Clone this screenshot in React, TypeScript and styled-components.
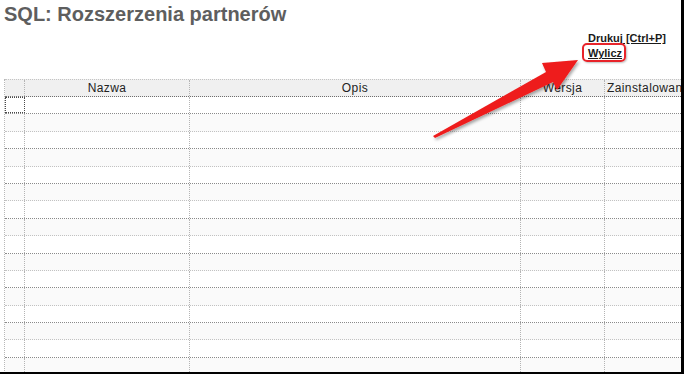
import styled, { createGlobalStyle } from 'styled-components';

const GlobalStyle = createGlobalStyle`
  html, body {
    margin: 0;
    padding: 0;
    background: #ffffff;
  }
  body {
    font-family: 'Liberation Sans', Arial, sans-serif;
  }
`;

const Page = styled.div`
  position: relative;
  box-sizing: border-box;
  width: 684px;
  height: 374px;
  padding-left: 4px;
  overflow: hidden;
  background: #ffffff;
  border-right: 3px solid #000000;
  border-bottom: 2px solid #000000;
`;

const Title = styled.h1`
  margin: 0;
  padding-top: 3px;
  font-size: 20px;
  line-height: 22px;
  font-weight: 700;
  color: #5e5e5e;
  white-space: nowrap;
`;

const Actions = styled.div`
  display: flex;
  flex-direction: column;
  align-items: flex-start;
  margin-top: 6px;
  margin-left: 584px;
`;

const ActionLink = styled.a<{ $marked?: boolean }>`
  position: relative;
  font-size: 11px;
  line-height: 15px;
  font-weight: 700;
  color: #1a1a1a;
  text-decoration: underline;
  white-space: nowrap;
  cursor: pointer;

  ${({ $marked }) =>
    $marked &&
    `
    &::after {
      content: '';
      position: absolute;
      left: -6px;
      right: -4px;
      top: -3px;
      bottom: -1px;
      border: 2px solid #e8242a;
      border-radius: 5px;
      box-shadow: 1px 1px 2px rgba(0, 0, 0, 0.25);
    }
  `}
`;

const Grid = styled.div`
  margin-top: 18px;
  border-left: 1px dotted #b8b8b8;
  width: 800px;
`;

const HeaderRow = styled.div`
  display: flex;
  box-sizing: border-box;
  height: 18px;
  background: #f0f0f0;
  border-top: 1px dotted #c4c4c4;
  border-bottom: 1px dotted #6e6e6e;
  letter-spacing: 0.4px;
`;

const Row = styled.div<{ $alt: boolean }>`
  display: flex;
  box-sizing: border-box;
  height: 17.4px;
  background: ${({ $alt }) => ($alt ? '#fafafa' : '#ffffff')};
  border-bottom: 1px dotted ${({ $alt }) => ($alt ? '#c2c2c2' : '#8a8a8a')};
`;

const Cell = styled.div<{ $w: number; $align?: string }>`
  box-sizing: border-box;
  flex: 0 0 ${({ $w }) => $w}px;
  height: 100%;
  border-right: 1px dotted #b4b4b4;
  overflow: hidden;
  white-space: nowrap;
  font-size: 12px;
  line-height: 16px;
  color: #222222;
  text-align: ${({ $align }) => $align || 'center'};
  padding: 0 2px;
`;

const FocusCell = styled(Cell)`
  outline: 1px dotted #4a4a4a;
  outline-offset: -1px;
`;

const ArrowLayer = styled.svg`
  position: absolute;
  left: 0;
  top: 0;
  width: 684px;
  height: 374px;
  pointer-events: none;
`;

const columns = [
  { w: 20, label: '' },
  { w: 165, label: 'Nazwa' },
  { w: 331, label: 'Opis' },
  { w: 84, label: 'Wersja' },
  { w: 200, label: 'Zainstalowane', align: 'left' },
];

const rowCount = 17;

export default function App() {
  return (
    <>
      <GlobalStyle />
      <Page>
        <Title>SQL: Rozszerzenia partnerów</Title>
        <Actions>
          <ActionLink>Drukuj [Ctrl+P]</ActionLink>
          <ActionLink $marked>Wylicz</ActionLink>
        </Actions>
        <Grid>
          <HeaderRow>
            {columns.map((c, i) => (
              <Cell key={i} $w={c.w} $align={c.align}>
                {c.label}
              </Cell>
            ))}
          </HeaderRow>
          {Array.from({ length: rowCount }).map((_, r) => (
            <Row key={r} $alt={r % 2 === 1}>
              {columns.map((c, i) =>
                r === 0 && i === 0 ? (
                  <FocusCell key={i} $w={c.w} />
                ) : (
                  <Cell key={i} $w={c.w} />
                )
              )}
            </Row>
          ))}
        </Grid>
        <ArrowLayer viewBox="0 0 684 374">
          <defs>
            <filter id="arrowShadow" x="-10%" y="-10%" width="130%" height="140%">
              <feDropShadow dx="1.5" dy="2" stdDeviation="1.5" floodColor="#000" floodOpacity="0.35" />
            </filter>
          </defs>
          <polygon
            points="433,136 546,72 542,63 578,60 557,90 553,82 435,138"
            fill="#ee1c1c"
            filter="url(#arrowShadow)"
          />
        </ArrowLayer>
      </Page>
    </>
  );
}
